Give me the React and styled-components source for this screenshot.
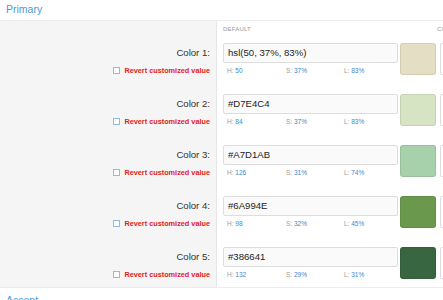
import React from "react";
import styled, { createGlobalStyle } from "styled-components";

const GlobalStyle = createGlobalStyle`
  body {
    margin: 0;
    font-family: "Liberation Sans", Arial, sans-serif;
    background: #fff;
    overflow: hidden;
  }
`;

const Page = styled.div`
  width: 443px;
  height: 300px;
  overflow: hidden;
`;

const GroupTitle = styled.div`
  height: 20px;
  padding-left: 6px;
  margin-top: ${(p) => (p.$spaced ? "3px" : "0")};
  font-size: 10.5px;
  line-height: 18px;
  color: #4a9ad8;
`;

const Section = styled.div`
  display: grid;
  grid-template-columns: 217px 1fr;
  border-top: 1px solid #ececec;
  border-bottom: 1px solid #ececec;
`;

const LabelCell = styled.div`
  background: #f5f5f5;
  border-right: 1px solid #e6e6e6;
  padding: 0 6px ${(p) => (p.$last ? "8px" : "19px")} 0;
  text-align: right;
`;

const HeadCell = styled.div`
  height: 22px;
  background: ${(p) => (p.$gray ? "#f5f5f5" : "#fff")};
  border-right: ${(p) => (p.$gray ? "1px solid #e6e6e6" : "none")};
  display: flex;
  padding-left: ${(p) => (p.$gray ? "0" : "6px")};
`;

const ColHead = styled.span`
  width: ${(p) => p.$w || "auto"};
  flex-shrink: 0;
  padding-top: 4px;
  font-size: 6px;
  line-height: 9px;
  letter-spacing: 0.2px;
  color: #999;
  white-space: nowrap;
`;

const ColorName = styled.div`
  height: 20px;
  line-height: 20px;
  font-size: 9.6px;
  color: #333;
`;

const Revert = styled.div`
  margin-top: 3px;
  display: flex;
  justify-content: flex-end;
  align-items: center;
  height: 9px;
`;

const RevertText = styled.span`
  width: 87px;
  text-align: right;
  white-space: nowrap;
  font-size: 7.3px;
  line-height: 9px;
  font-weight: bold;
  color: #e3221e;
`;

const Check = styled.span`
  box-sizing: border-box;
  display: block;
  width: 7px;
  height: 7px;
  flex-shrink: 0;
  border: 1px solid #8fbbe2;
  background: #fff;
  margin-right: 3px;
`;

const ValueCell = styled.div`
  display: flex;
  align-items: flex-start;
  padding: 0 0 ${(p) => (p.$last ? "8px" : "19px")} 6px;
  min-width: 0;
`;

const Field = styled.div`
  width: 175px;
  flex-shrink: 0;
`;

const Input = styled.div`
  box-sizing: border-box;
  height: 20px;
  border: 1px solid #dddddd;
  border-radius: 2px;
  background: #fafafa;
  padding-left: 4px;
  font-size: 9.6px;
  line-height: 18px;
  color: #222;
`;

const Hsl = styled.div`
  display: grid;
  grid-template-columns: 59px 58px 58px;
  padding-left: 4px;
  margin-top: 3px;
  font-size: 6.5px;
  line-height: 9px;
  color: #999;

  b {
    font-weight: normal;
    color: #3b88c9;
  }
`;

const Swatch = styled.div`
  box-sizing: border-box;
  width: 36px;
  height: 32px;
  flex-shrink: 0;
  margin-left: 2px;
  border: 1px solid rgba(0, 0, 0, 0.08);
  border-radius: 3px;
  background: ${(p) => p.$color};
`;

const NextBox = styled.div`
  box-sizing: border-box;
  width: 40px;
  height: 32px;
  flex-shrink: 0;
  margin-left: 4px;
  border: 1px solid #dddddd;
  border-radius: 2px;
  background: #fff;
`;

const colors = [
  { value: "hsl(50, 37%, 83%)", swatch: "hsl(50, 37%, 83%)", h: 50, s: 37, l: 83 },
  { value: "#D7E4C4", swatch: "#D7E4C4", h: 84, s: 37, l: 83 },
  { value: "#A7D1AB", swatch: "#A7D1AB", h: 126, s: 31, l: 74 },
  { value: "#6A994E", swatch: "#6A994E", h: 98, s: 32, l: 45 },
  { value: "#386641", swatch: "#386641", h: 132, s: 29, l: 31 },
];

const App = () => {
  return (
    <Page>
      <GlobalStyle />
      <GroupTitle>Primary</GroupTitle>
      <Section>
        <HeadCell $gray />
        <HeadCell>
          <ColHead $w="214px">DEFAULT</ColHead>
          <ColHead>CUSTOM</ColHead>
        </HeadCell>
        {colors.map((c, i) => {
          const last = i === colors.length - 1;
          return (
            <React.Fragment key={c.value}>
              <LabelCell $last={last}>
                <ColorName>Color {i + 1}:</ColorName>
                <Revert>
                  <Check />
                  <RevertText>Revert customized value</RevertText>
                </Revert>
              </LabelCell>
              <ValueCell $last={last}>
                <Field>
                  <Input>{c.value}</Input>
                  <Hsl>
                    <span>
                      H: <b>{c.h}</b>
                    </span>
                    <span>
                      S: <b>{c.s}%</b>
                    </span>
                    <span>
                      L: <b>{c.l}%</b>
                    </span>
                  </Hsl>
                </Field>
                <Swatch $color={c.swatch} />
                <NextBox />
              </ValueCell>
            </React.Fragment>
          );
        })}
      </Section>
      <GroupTitle $spaced>Accent</GroupTitle>
    </Page>
  );
};

export default App;
